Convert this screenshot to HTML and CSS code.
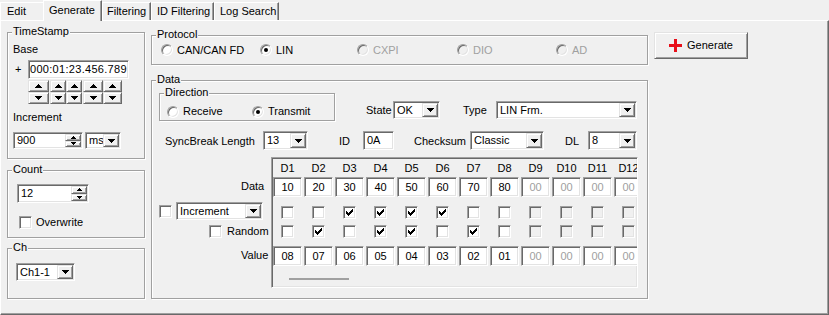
FILE: index.html
```html
<!DOCTYPE html>
<html>
<head>
<meta charset="utf-8">
<title>Generate</title>
<link rel="stylesheet" href="styles.css">
</head>
<body>
<div class="app">
  <div class="tabs">
    <div class="tab tab-edit">Edit</div>
    <div class="tab tab-gen active">Generate</div>
    <div class="tab tab-filt">Filtering</div>
    <div class="tab tab-idf">ID Filtering</div>
    <div class="tab tab-log">Log Search</div>
  </div>
  <div class="panel">
    <div class="col-left">
      <div class="group g-ts">
        <span class="gtitle">TimeStamp</span>
        <div class="ts-base">Base</div>
        <div class="ts-baserow">
          <span class="plus">+</span>
          <div class="field f-base"><span class="ftext">000:01:23.456.789</span></div>
        </div>
        <div class="ts-spins">
          <div class="spin s1">
            <div class="sb"><svg width="7" height="4" viewBox="0 0 7 4"><path d="M3 0h1v1H3zM2 1h3v1H2zM1 2h5v1H1zM0 3h7v1H0z"/></svg></div>
            <div class="sb"><svg width="7" height="4" viewBox="0 0 7 4"><path d="M0 0h7v1H0zM1 1h5v1H1zM2 2h3v1H2zM3 3h1v1H3z"/></svg></div>
          </div>
          <div class="spin s2">
            <div class="sb"><svg width="7" height="4" viewBox="0 0 7 4"><path d="M3 0h1v1H3zM2 1h3v1H2zM1 2h5v1H1zM0 3h7v1H0z"/></svg></div>
            <div class="sb"><svg width="7" height="4" viewBox="0 0 7 4"><path d="M0 0h7v1H0zM1 1h5v1H1zM2 2h3v1H2zM3 3h1v1H3z"/></svg></div>
          </div>
          <div class="spin s3">
            <div class="sb"><svg width="7" height="4" viewBox="0 0 7 4"><path d="M3 0h1v1H3zM2 1h3v1H2zM1 2h5v1H1zM0 3h7v1H0z"/></svg></div>
            <div class="sb"><svg width="7" height="4" viewBox="0 0 7 4"><path d="M0 0h7v1H0zM1 1h5v1H1zM2 2h3v1H2zM3 3h1v1H3z"/></svg></div>
          </div>
          <div class="spin s4">
            <div class="sb"><svg width="7" height="4" viewBox="0 0 7 4"><path d="M3 0h1v1H3zM2 1h3v1H2zM1 2h5v1H1zM0 3h7v1H0z"/></svg></div>
            <div class="sb"><svg width="7" height="4" viewBox="0 0 7 4"><path d="M0 0h7v1H0zM1 1h5v1H1zM2 2h3v1H2zM3 3h1v1H3z"/></svg></div>
          </div>
          <div class="spin s5">
            <div class="sb"><svg width="7" height="4" viewBox="0 0 7 4"><path d="M3 0h1v1H3zM2 1h3v1H2zM1 2h5v1H1zM0 3h7v1H0z"/></svg></div>
            <div class="sb"><svg width="7" height="4" viewBox="0 0 7 4"><path d="M0 0h7v1H0zM1 1h5v1H1zM2 2h3v1H2zM3 3h1v1H3z"/></svg></div>
          </div>
        </div>
        <div class="ts-inc">Increment</div>
        <div class="ts-incrow">
          <div class="field f-inc">
            <span class="ftext">900</span>
            <div class="fspin">
              <div class="sb"><svg width="5" height="3" viewBox="0 0 5 3"><path d="M2 0h1v1H2zM1 1h3v1H1zM0 2h5v1H0z"/></svg></div>
              <div class="sb"><svg width="5" height="3" viewBox="0 0 5 3"><path d="M0 0h5v1H0zM1 1h3v1H1zM2 2h1v1H2z"/></svg></div>
            </div>
          </div>
          <div class="combo c-ms"><span class="cv">ms</span><div class="cbtn"><svg width="7" height="4" viewBox="0 0 7 4"><path d="M0 0h7v1H0zM1 1h5v1H1zM2 2h3v1H2zM3 3h1v1H3z"/></svg></div></div>
        </div>
      </div>

      <div class="group g-count">
        <span class="gtitle">Count</span>
        <div class="cnt-row">
          <div class="field f-count">
            <span class="ftext">12</span>
            <div class="fspin">
              <div class="sb"><svg width="5" height="3" viewBox="0 0 5 3"><path d="M2 0h1v1H2zM1 1h3v1H1zM0 2h5v1H0z"/></svg></div>
              <div class="sb"><svg width="5" height="3" viewBox="0 0 5 3"><path d="M0 0h5v1H0zM1 1h3v1H1zM2 2h1v1H2z"/></svg></div>
            </div>
          </div>
        </div>
        <div class="ow-row"><span class="cbx"></span><span class="ow-text">Overwrite</span></div>
      </div>

      <div class="group g-ch">
        <span class="gtitle">Ch</span>
        <div class="ch-row">
          <div class="combo c-ch"><span class="cv">Ch1-1</span><div class="cbtn"><svg width="7" height="4" viewBox="0 0 7 4"><path d="M0 0h7v1H0zM1 1h5v1H1zM2 2h3v1H2zM3 3h1v1H3z"/></svg></div></div>
        </div>
      </div>
    </div>

    <div class="col-mid">
      <div class="group g-proto">
        <span class="gtitle">Protocol</span>
        <div class="ropt o1"><span class="radio"></span><span class="rtext">CAN/CAN FD</span></div>
        <div class="ropt o2"><span class="radio on"></span><span class="rtext">LIN</span></div>
        <div class="ropt o3 dis"><span class="radio dis"></span><span class="rtext">CXPI</span></div>
        <div class="ropt o4 dis"><span class="radio dis"></span><span class="rtext">DIO</span></div>
        <div class="ropt o5 dis"><span class="radio dis"></span><span class="rtext">AD</span></div>
      </div>

      <div class="group g-data">
        <span class="gtitle">Data</span>
        <div class="d-row1">
          <div class="group g-dir">
            <span class="gtitle">Direction</span>
            <div class="ropt d1"><span class="radio"></span><span class="rtext">Receive</span></div>
            <div class="ropt d2"><span class="radio on"></span><span class="rtext">Transmit</span></div>
          </div>
          <span class="lbl st-lbl">State</span>
          <div class="combo c-st"><span class="cv">OK</span><div class="cbtn"><svg width="7" height="4" viewBox="0 0 7 4"><path d="M0 0h7v1H0zM1 1h5v1H1zM2 2h3v1H2zM3 3h1v1H3z"/></svg></div></div>
          <span class="lbl ty-lbl">Type</span>
          <div class="combo c-ty"><span class="cv">LIN Frm.</span><div class="cbtn"><svg width="7" height="4" viewBox="0 0 7 4"><path d="M0 0h7v1H0zM1 1h5v1H1zM2 2h3v1H2zM3 3h1v1H3z"/></svg></div></div>
        </div>

        <div class="d-row2">
          <span class="lbl sb-lbl">SyncBreak Length</span>
          <div class="combo c-sb"><span class="cv">13</span><div class="cbtn"><svg width="7" height="4" viewBox="0 0 7 4"><path d="M0 0h7v1H0zM1 1h5v1H1zM2 2h3v1H2zM3 3h1v1H3z"/></svg></div></div>
          <span class="lbl id-lbl">ID</span>
          <div class="field f-id"><span class="ftext">0A</span></div>
          <span class="lbl ck-lbl">Checksum</span>
          <div class="combo c-ck"><span class="cv">Classic</span><div class="cbtn"><svg width="7" height="4" viewBox="0 0 7 4"><path d="M0 0h7v1H0zM1 1h5v1H1zM2 2h3v1H2zM3 3h1v1H3z"/></svg></div></div>
          <span class="lbl dl-lbl">DL</span>
          <div class="combo c-dl"><span class="cv">8</span><div class="cbtn"><svg width="7" height="4" viewBox="0 0 7 4"><path d="M0 0h7v1H0zM1 1h5v1H1zM2 2h3v1H2zM3 3h1v1H3z"/></svg></div></div>
        </div>

        <div class="d-row3">
          <div class="lcol">
            <div class="lc-sp"></div>
            <div class="lc-data">Data</div>
            <div class="lc-inc">
              <span class="cbx"></span>
              <div class="combo c-incr"><span class="cv">Increment</span><div class="cbtn"><svg width="7" height="4" viewBox="0 0 7 4"><path d="M0 0h7v1H0zM1 1h5v1H1zM2 2h3v1H2zM3 3h1v1H3z"/></svg></div></div>
            </div>
            <div class="lc-rand"><span class="cbx"></span><span class="rand-text">Random</span></div>
            <div class="lc-val">Value</div>
          </div>

          <div class="grid-box">
            <div class="dgrid">
              <div class="hd">D1</div><div class="hd">D2</div><div class="hd">D3</div><div class="hd">D4</div><div class="hd">D5</div><div class="hd">D6</div><div class="hd">D7</div><div class="hd">D8</div><div class="hd">D9</div><div class="hd">D10</div><div class="hd">D11</div><div class="hd">D12</div>

              <div class="field cell">10</div><div class="field cell">20</div><div class="field cell">30</div><div class="field cell">40</div><div class="field cell">50</div><div class="field cell">60</div><div class="field cell">70</div><div class="field cell">80</div><div class="field cell dis">00</div><div class="field cell dis">00</div><div class="field cell dis">00</div><div class="field cell dis">00</div>

              <span class="cbx gc"></span>
              <span class="cbx gc"></span>
              <span class="cbx gc"><svg width="7" height="7" viewBox="0 0 7 7"><path d="M6 0h1v1H6zM5 1h2v1H5zM0 2h1v1H0zM4 2h3v1H4zM0 3h2v1H0zM3 3h3v1H3zM0 4h5v1H0zM1 5h3v1H1zM2 6h1v1H2z"/></svg></span>
              <span class="cbx gc"><svg width="7" height="7" viewBox="0 0 7 7"><path d="M6 0h1v1H6zM5 1h2v1H5zM0 2h1v1H0zM4 2h3v1H4zM0 3h2v1H0zM3 3h3v1H3zM0 4h5v1H0zM1 5h3v1H1zM2 6h1v1H2z"/></svg></span>
              <span class="cbx gc"><svg width="7" height="7" viewBox="0 0 7 7"><path d="M6 0h1v1H6zM5 1h2v1H5zM0 2h1v1H0zM4 2h3v1H4zM0 3h2v1H0zM3 3h3v1H3zM0 4h5v1H0zM1 5h3v1H1zM2 6h1v1H2z"/></svg></span>
              <span class="cbx gc"><svg width="7" height="7" viewBox="0 0 7 7"><path d="M6 0h1v1H6zM5 1h2v1H5zM0 2h1v1H0zM4 2h3v1H4zM0 3h2v1H0zM3 3h3v1H3zM0 4h5v1H0zM1 5h3v1H1zM2 6h1v1H2z"/></svg></span>
              <span class="cbx gc"></span>
              <span class="cbx gc"></span>
              <span class="cbx gc dis"></span>
              <span class="cbx gc dis"></span>
              <span class="cbx gc dis"></span>
              <span class="cbx gc dis"></span>

              <span class="cbx gc"></span>
              <span class="cbx gc"><svg width="7" height="7" viewBox="0 0 7 7"><path d="M6 0h1v1H6zM5 1h2v1H5zM0 2h1v1H0zM4 2h3v1H4zM0 3h2v1H0zM3 3h3v1H3zM0 4h5v1H0zM1 5h3v1H1zM2 6h1v1H2z"/></svg></span>
              <span class="cbx gc"></span>
              <span class="cbx gc"><svg width="7" height="7" viewBox="0 0 7 7"><path d="M6 0h1v1H6zM5 1h2v1H5zM0 2h1v1H0zM4 2h3v1H4zM0 3h2v1H0zM3 3h3v1H3zM0 4h5v1H0zM1 5h3v1H1zM2 6h1v1H2z"/></svg></span>
              <span class="cbx gc"><svg width="7" height="7" viewBox="0 0 7 7"><path d="M6 0h1v1H6zM5 1h2v1H5zM0 2h1v1H0zM4 2h3v1H4zM0 3h2v1H0zM3 3h3v1H3zM0 4h5v1H0zM1 5h3v1H1zM2 6h1v1H2z"/></svg></span>
              <span class="cbx gc"></span>
              <span class="cbx gc"><svg width="7" height="7" viewBox="0 0 7 7"><path d="M6 0h1v1H6zM5 1h2v1H5zM0 2h1v1H0zM4 2h3v1H4zM0 3h2v1H0zM3 3h3v1H3zM0 4h5v1H0zM1 5h3v1H1zM2 6h1v1H2z"/></svg></span>
              <span class="cbx gc"></span>
              <span class="cbx gc dis"></span>
              <span class="cbx gc dis"></span>
              <span class="cbx gc dis"></span>
              <span class="cbx gc dis"></span>

              <div class="field cell vcell">08</div><div class="field cell vcell">07</div><div class="field cell vcell">06</div><div class="field cell vcell">05</div><div class="field cell vcell">04</div><div class="field cell vcell">03</div><div class="field cell vcell">02</div><div class="field cell vcell">01</div><div class="field cell vcell dis">00</div><div class="field cell vcell dis">00</div><div class="field cell vcell dis">00</div><div class="field cell vcell dis">00</div>
            </div>
            <div class="hthumb"></div>
          </div>
        </div>
      </div>
    </div>

    <div class="gen-btn">
      <svg class="plus-ic" width="13" height="13" viewBox="0 0 13 13"><path d="M5 0h3v5h5v3H8v5H5V8H0V5h5z" fill="#e8101a"/></svg>
      <span>Generate</span>
    </div>
  </div>
</div>
</body>
</html>
```

FILE: styles.css
```css
* { box-sizing: border-box; }
html, body { margin: 0; padding: 0; }
body {
  background: #f0f0f0;
  font-family: "Liberation Sans", Arial, sans-serif;
  font-size: 11px;
  line-height: 13px;
  color: #000;
  width: 829px;
  height: 315px;
  overflow: hidden;
}
svg { display: block; fill: #000; }

.app { width: 829px; height: 315px; display: flex; flex-direction: column; }

/* tabs */
.tabs { display: flex; height: 20px; position: relative; z-index: 2; flex: none; }
.tab {
  height: 18px; margin-top: 2px;
  border-top: 1px solid #fff; border-left: 1px solid #fff; border-right: 1px solid #696969;
  box-shadow: inset -1px 0 0 #a0a0a0;
  line-height: 17px; white-space: nowrap;
}
.tab-edit { width: 43px; padding-left: 6px; border-right: none; box-shadow: none; }
.tab-gen { width: 59px; padding-left: 5px; }
.tab-filt { width: 49px; padding-left: 4px; }
.tab-idf { width: 63px; padding-left: 5px; }
.tab-log { width: 65px; padding-left: 5px; }
.tab.active { height: 21px; margin-top: 0; line-height: 19px; background: #f0f0f0; }

/* panel */
.panel {
  position: relative;
  height: 295px;
  border-top: 1px solid #fff; border-left: 1px solid #fff;
  border-right: 1px solid #696969; border-bottom: 1px solid #696969;
  box-shadow: inset -1px -1px 0 #a0a0a0;
  display: flex; align-items: flex-start;
  padding: 11px 0 0 6px;
}

/* group boxes */
.group {
  position: relative;
  border: 1px solid #a0a0a0;
  box-shadow: inset 1px 1px 0 #fff, 1px 1px 0 #fff;
}
.gtitle {
  position: absolute; left: 4px; top: -8px;
  padding: 0 1px; background: #f0f0f0; line-height: 13px; white-space: nowrap;
}

/* 3D controls */
.field {
  border: 1px solid; border-color: #a0a0a0 #fff #fff #a0a0a0;
  box-shadow: inset 1px 1px 0 #696969, inset -1px -1px 0 #e3e3e3;
  background: #fff; padding: 1px;
  display: flex; align-items: center;
}
.ftext { flex: 1; padding-left: 2px; white-space: nowrap; overflow: hidden; }
.combo {
  border: 1px solid; border-color: #a0a0a0 #fff #fff #a0a0a0;
  box-shadow: inset 1px 1px 0 #696969, inset -1px -1px 0 #e3e3e3;
  background: #fff; padding: 1px;
  display: flex; align-items: stretch;
}
.cv { flex: 1; padding-left: 2px; white-space: nowrap; overflow: hidden; display: flex; align-items: center; }
.cbtn, .sb {
  background: #f0f0f0;
  border: 1px solid; border-color: #e3e3e3 #696969 #696969 #e3e3e3;
  box-shadow: inset 1px 1px 0 #fff, inset -1px -1px 0 #a0a0a0;
  display: flex; align-items: center; justify-content: center;
}
.cbtn { width: 16px; flex: none; }
.fspin { width: 16px; align-self: stretch; display: flex; flex-direction: column; flex: none; }
.fspin .sb { flex: 1; }

.radio {
  position: relative; flex: none;
  width: 12px; height: 12px; border-radius: 50%;
  border: 1px solid; border-color: #a0a0a0 #fff #fff #a0a0a0;
  box-shadow: inset 1px 1px 0 #696969, inset -1px -1px 0 #e3e3e3;
  background: #fff;
}
.radio.on::after {
  content: ""; position: absolute; left: 3px; top: 3px;
  width: 4px; height: 4px; border-radius: 50%; background: #000;
}
.radio.dis { background: #f0f0f0; }
.ropt { display: flex; align-items: center; flex: none; }
.rtext { margin-left: 4px; white-space: nowrap; }
.ropt.dis .rtext { color: #a0a0a0; }

.cbx {
  width: 13px; height: 13px; flex: none;
  border: 1px solid; border-color: #a0a0a0 #fff #fff #a0a0a0;
  box-shadow: inset 1px 1px 0 #696969, inset -1px -1px 0 #e3e3e3;
  background: #fff;
  display: flex; align-items: center; justify-content: center;
}
.cbx.dis { background: #f0f0f0; }

/* left column */
.col-left { width: 138px; flex: none; display: flex; flex-direction: column; }
.g-ts { height: 127px; }
.g-count { height: 68px; margin-top: 11px; }
.g-ch { height: 51px; margin-top: 10px; }

.ts-base { margin-top: 10px; padding-left: 5px; height: 13px; }
.ts-baserow { display: flex; margin-top: 4px; padding-left: 7px; }
.plus { width: 13px; line-height: 19px; }
.f-base { width: 101px; height: 19px; }
.f-base .ftext { padding-left: 0; letter-spacing: 0.3px; }
.ts-spins { display: flex; margin-top: 1px; margin-left: 20px; height: 24px; }
.spin { display: flex; flex-direction: column; }
.spin .sb { flex: 1; }
.s1 { width: 21px; }
.s2 { width: 16px; margin-left: 1px; }
.s3 { width: 16px; }
.s4 { width: 20px; margin-left: 1px; }
.s5 { width: 19px; }
.ts-inc { margin-top: 7px; padding-left: 5px; height: 13px; }
.ts-incrow { display: flex; margin-top: 8px; padding-left: 5px; }
.f-inc { width: 70px; height: 17px; }
.c-ms { width: 36px; height: 17px; margin-left: 2px; }

.cnt-row { margin-top: 13px; padding-left: 9px; }
.f-count { width: 72px; height: 19px; }
.ow-row { display: flex; align-items: center; margin-top: 13px; padding-left: 11px; height: 13px; }
.ow-text { margin-left: 4px; }

.ch-row { margin-top: 14px; padding-left: 8px; }
.c-ch { width: 59px; height: 18px; }

/* middle column */
.col-mid { width: 497px; flex: none; margin-left: 6px; margin-top: 3px; display: flex; flex-direction: column; }
.g-proto { height: 30px; display: flex; align-items: center; padding-left: 9px; }
.o1 { width: 99px; }
.o2 { width: 97px; }
.o3 { width: 100px; }
.o4 { width: 99px; }

.g-data { height: 219px; margin-top: 15px; padding-left: 7px; }
.d-row1 { display: flex; align-items: flex-start; margin-top: 12px; }
.g-dir { width: 176px; height: 28px; display: flex; align-items: flex-start; padding: 11px 0 0 7px; flex: none; }
.d1 { width: 85px; }
.lbl { white-space: nowrap; flex: none; line-height: 18px; }
.st-lbl { margin-left: 31px; width: 27px; margin-top: 8px; }
.c-st { width: 47px; height: 18px; margin-top: 8px; flex: none; }
.ty-lbl { margin-left: 23px; width: 33px; margin-top: 8px; }
.c-ty { width: 141px; height: 18px; margin-top: 8px; flex: none; }

.d-row2 { display: flex; align-items: center; margin-top: 10px; height: 19px; }
.sb-lbl { width: 104px; padding-left: 6px; }
.c-sb { width: 45px; height: 19px; flex: none; }
.id-lbl { margin-left: 31px; width: 24px; }
.f-id { width: 31px; height: 19px; flex: none; }
.ck-lbl { margin-left: 20px; width: 56px; }
.c-ck { width: 74px; height: 19px; flex: none; }
.dl-lbl { margin-left: 21px; width: 23px; }
.c-dl { width: 49px; height: 19px; flex: none; }

.d-row3 { display: flex; margin-top: 7px; }
.lcol { width: 105px; flex: none; }
.lc-sp { height: 19px; }
.lc-data { height: 20px; line-height: 20px; padding-left: 82px; }
.lc-inc { display: flex; align-items: center; margin-top: 6px; height: 18px; }
.c-incr { width: 87px; height: 18px; margin-left: 4px; }
.lc-rand { display: flex; align-items: center; margin-top: 5px; height: 13px; padding-left: 50px; white-space: nowrap; }
.rand-text { margin-left: 5px; }
.lc-val { margin-top: 7px; height: 20px; line-height: 20px; padding-left: 82px; white-space: nowrap; }

.grid-box {
  margin-left: 7px; width: 367px; height: 131px; flex: none;
  overflow: hidden;
  border: 1px solid; border-color: #a0a0a0 #fff #fff #a0a0a0;
  box-shadow: inset 1px 1px 0 #696969, inset -1px -1px 0 #e3e3e3;
}
.dgrid {
  display: grid;
  grid-template-columns: repeat(12, 29px);
  column-gap: 2px;
  grid-template-rows: 19px 20px 22px 19px 28px;
  padding-left: 1px;
  width: max-content;
}
.hd { align-self: center; text-align: center; white-space: nowrap; padding-top: 2px; }
.cell { height: 20px; justify-content: center; }
.vcell { align-self: end; }
.cell.dis { color: #a0a0a0; }
.gc { justify-self: center; align-self: end; }
.hthumb { margin: 12px 0 0 17px; width: 60px; height: 2px; background: #a0a0a0; }

/* generate button */
.gen-btn {
  width: 94px; height: 27px; margin-left: 6px; flex: none;
  border: 1px solid; border-color: #e3e3e3 #696969 #696969 #e3e3e3;
  box-shadow: inset 1px 1px 0 #fff, inset -1px -1px 0 #a0a0a0;
  display: flex; align-items: center; justify-content: center; gap: 5px;
}
```
